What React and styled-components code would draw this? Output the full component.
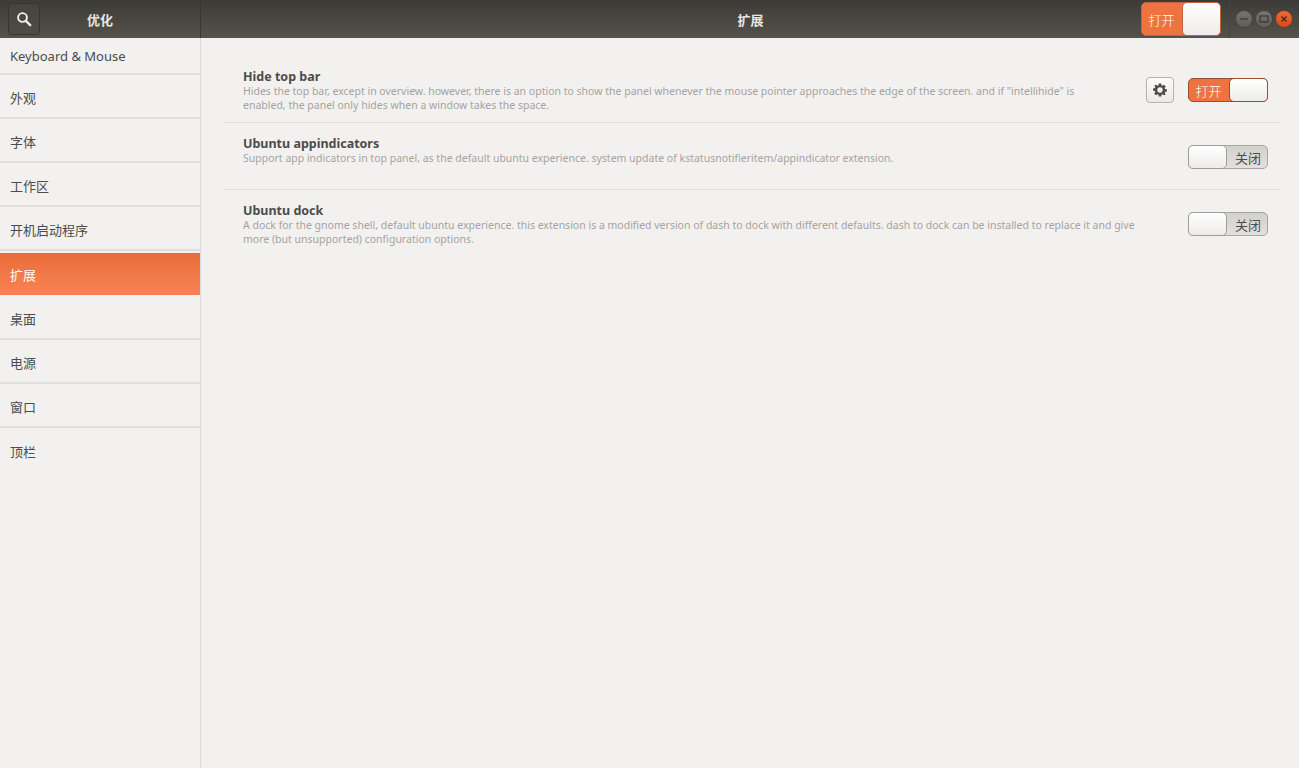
import React from "react";
import styled, { createGlobalStyle } from "styled-components";

const GlobalStyle = createGlobalStyle`
    html, body {
        margin: 0;
        padding: 0;
        height: 100%;
        background: #f2f1f0;
    }
    body {
        font-family: "Noto Sans", "Noto Sans CJK SC", sans-serif;
        overflow: hidden;
    }
`

const Window = styled.div`
    display: flex;
    flex-direction: column;
    width: 1299px;
    height: 768px;
`

const HeaderBar = styled.header`
    display: flex;
    flex: none;
    height: 38px;
    color: #e8e6e2;
    background: linear-gradient(#3c3b37, #55524a);
`

const HeaderLeft = styled.div`
    display: flex;
    align-items: center;
    flex: none;
    width: 201px;
    height: 38px;
    padding-left: 8px;
    box-sizing: border-box;
    border-right: 1px solid #383732;
`

const SearchButton = styled.button`
    display: flex;
    align-items: center;
    justify-content: center;
    width: 32px;
    height: 32px;
    padding: 0;
    border: 1px solid #35342f;
    border-radius: 4px;
    background: linear-gradient(#44433d, #4f4c45);
    color: #f2f1f0;
`

const AppTitle = styled.div`
    width: 120px;
    text-align: center;
    font-size: 13px;
    font-weight: 700;
    font-family: "Noto Sans CJK SC", sans-serif;
`

const HeaderCenter = styled.div`
    position: relative;
    display: flex;
    flex: 1;
    align-items: center;
    padding-left: 71px;
`

const PageTitle = styled.div`
    width: 100%;
    text-align: center;
    font-size: 13px;
    font-weight: 700;
    font-family: "Noto Sans CJK SC", sans-serif;
`

const HeaderSwitchSlot = styled.div`
    position: absolute;
    top: 2px;
    right: 8px;
`

const WindowControls = styled.div`
    display: flex;
    align-items: center;
    flex: none;
    gap: 4px;
    width: 70px;
    height: 38px;
    padding-left: 6px;
    box-sizing: border-box;
    border-left: 1px solid #47453f;
`

const RoundButton = styled.div`
    display: flex;
    align-items: center;
    justify-content: center;
    width: 16px;
    height: 16px;
    border-radius: 50%;
    background: ${(p) => (p.$close ? "linear-gradient(#ee6a3a, #d9481a)" : "linear-gradient(#76746e, #5f5d57)")};
    box-shadow: 0 0 0 1px ${(p) => (p.$close ? "#6e3c27" : "#45433e")};
`

const Body = styled.div`
    display: flex;
    flex: 1;
`

const Sidebar = styled.nav`
    flex: none;
    width: 201px;
    box-sizing: border-box;
    border-right: 1px solid #dddbd8;
`

const SideRow = styled.div`
    display: flex;
    align-items: center;
    box-sizing: border-box;
    height: ${(p) => (p.$first ? "37px" : "44px")};
    padding-left: 10px;
    padding-top: ${(p) => (p.$first ? "0" : "2px")};
    font-size: 13px;
    color: #4c4c4c;
    border-bottom: ${(p) => (p.$last ? "none" : "2px solid #e2e0de")};
    font-family: "Noto Sans", "Noto Sans CJK SC", sans-serif;
`

const SideRowActive = styled.div`
    display: flex;
    align-items: center;
    box-sizing: border-box;
    height: 42px;
    margin-top: 2px;
    margin-bottom: 1px;
    padding-left: 10px;
    font-size: 13px;
    color: #fff;
    background: linear-gradient(#ea6d3b, #f98354);
    font-family: "Noto Sans CJK SC", sans-serif;
`

const Content = styled.main`
    flex: 1;
    padding: 18px 20px 0 22px;
`

const ExtRow = styled.div`
    display: flex;
    align-items: flex-start;
    box-sizing: border-box;
    height: 67px;
    padding: 14px 12px 0 20px;
    border-bottom: ${(p) => (p.$last ? "none" : "1px solid #e0dedb")};
`

const ExtText = styled.div`
    width: 903px;
    flex: none;
`

const ExtName = styled.div`
    font-size: 12.5px;
    line-height: 14px;
    font-weight: 700;
    color: #4c4c4c;
`

const ExtDesc = styled.div`
    font-size: 10.5px;
    line-height: 14px;
    color: #a5a3a1;
    white-space: pre-line;
`

const ExtActions = styled.div`
    display: flex;
    align-items: center;
    flex: 1;
    justify-content: flex-end;
    gap: 14px;
    min-height: 26px;
    padding-top: 7px;
`

const GearButton = styled.button`
    display: flex;
    align-items: center;
    justify-content: center;
    width: 28px;
    height: 26px;
    padding: 0;
    box-sizing: border-box;
    border: 1px solid #b5b3b0;
    border-radius: 4px;
    background: linear-gradient(#fbfbfa, #eceae8);
    color: #4c4c4c;
`

const SwitchTrack = styled.div`
    display: flex;
    flex-direction: ${(p) => (p.$on ? "row" : "row-reverse")};
    box-sizing: border-box;
    width: 80px;
    height: ${(p) => (p.$large ? "34px" : "24px")};
    border: 1px solid ${(p) => (p.$on ? (p.$large ? "#c4643c" : "#9a4e30") : "#a8a6a3")};
    border-radius: 5px;
    background: ${(p) => (p.$on ? "#ee7340" : "linear-gradient(#d3d1ce, #e2e0de)")};
`

const SwitchLabel = styled.span`
    display: flex;
    align-items: center;
    flex: 1;
    justify-content: center;
    padding: ${(p) => (p.$on ? "0 2px 0 0" : "0 0 0 3px")};
    font-size: 13px;
    font-family: "Noto Sans CJK SC", sans-serif;
    font-weight: ${(p) => (p.$on ? 300 : 400)};
    color: ${(p) => (p.$on ? "#fff" : "#4c4c4c")};
`

const SwitchKnob = styled.span`
    flex: none;
    box-sizing: border-box;
    width: 39px;
    margin: -1px;
    border: 1px solid ${(p) => (p.$on ? (p.$large ? "#c4643c" : "#9a4e30") : "#a09e9b")};
    border-radius: 5px;
    background: linear-gradient(#ffffff, #eeecea);
`

const Switch = ({ on, large }) => (
    <SwitchTrack $on={on} $large={large}>
        <SwitchLabel $on={on}>{on ? "打开" : "关闭"}</SwitchLabel>
        <SwitchKnob $on={on} $large={large} />
    </SwitchTrack>
);

const SearchIcon = () => (
    <svg width="16" height="16" viewBox="0 0 16 16" fill="none" stroke="currentColor">
        <circle cx="6.5" cy="6.5" r="4.4" strokeWidth="1.9" />
        <path d="M10 10l4.2 4.2" strokeWidth="2.4" strokeLinecap="round" />
    </svg>
);

const GearIcon = () => (
    <svg width="14" height="14" viewBox="0 0 14 14" fill="currentColor" fillRule="evenodd">
        <path d="M5.8.5h2.4l.3 1.8 1 .4L11 1.700l1.700 1.700-1 1.500.4 1 1.800.300v2.400l-1.800.300-.4 1 1 1.500L11 12.300l-1.500-1-1 .4-.3 1.800H5.800l-.3-1.800-1-.4-1.500 1-1.700-1.700 1-1.500-.4-1L.1 7.800V5.400l1.800-.300.4-1-1-1.500L3 1.700l1.500 1 1-.4zM7 4.300a2.700 2.700 0 1 0 0 5.400 2.700 2.700 0 0 0 0-5.400z" />
    </svg>
);

const sideTop = ["外观", "字体", "工作区", "开机启动程序"];
const sideBottom = ["桌面", "电源", "窗口"];

const extensions = [
    {
        name: "Hide top bar",
        desc: "Hides the top bar, except in overview. however, there is an option to show the panel whenever the mouse pointer approaches the edge of the screen. and if \"intellihide\" is\nenabled, the panel only hides when a window takes the space.",
        on: true,
        settings: true,
    },
    {
        name: "Ubuntu appindicators",
        desc: "Support app indicators in top panel, as the default ubuntu experience. system update of kstatusnotifieritem/appindicator extension.",
        on: false,
    },
    {
        name: "Ubuntu dock",
        desc: "A dock for the gnome shell, default ubuntu experience. this extension is a modified version of dash to dock with different defaults. dash to dock can be installed to replace it and give\nmore (but unsupported) configuration options.",
        on: false,
        last: true,
    },
];

const App = () => {
    return (
        <Window>
            <GlobalStyle />
            <HeaderBar>
                <HeaderLeft>
                    <SearchButton><SearchIcon /></SearchButton>
                    <AppTitle>优化</AppTitle>
                </HeaderLeft>
                <HeaderCenter>
                    <PageTitle>扩展</PageTitle>
                    <HeaderSwitchSlot><Switch on large /></HeaderSwitchSlot>
                </HeaderCenter>
                <WindowControls>
                    <RoundButton>
                        <svg width="10" height="10" viewBox="0 0 10 10"><path d="M1 5h8" stroke="#2f2e2b" strokeWidth="1" /></svg>
                    </RoundButton>
                    <RoundButton>
                        <svg width="10" height="10" viewBox="0 0 10 10"><rect x="1" y="2" width="8" height="6" fill="none" stroke="#2f2e2b" strokeWidth="1" /></svg>
                    </RoundButton>
                    <RoundButton $close>
                        <svg width="10" height="10" viewBox="0 0 10 10"><path d="M2.500 2.500l5 5M7.500 2.500l-5 5" stroke="#3a2a20" strokeWidth="1.300" /></svg>
                    </RoundButton>
                </WindowControls>
            </HeaderBar>
            <Body>
                <Sidebar>
                    <SideRow $first>Keyboard &amp; Mouse</SideRow>
                    {sideTop.map((item) => <SideRow key={item}>{item}</SideRow>)}
                    <SideRowActive>扩展</SideRowActive>
                    {sideBottom.map((item) => <SideRow key={item}>{item}</SideRow>)}
                    <SideRow $last>顶栏</SideRow>
                </Sidebar>
                <Content>
                    {extensions.map((ext) => (
                        <ExtRow key={ext.name} $last={ext.last}>
                            <ExtText>
                                <ExtName>{ext.name}</ExtName>
                                <ExtDesc>{ext.desc}</ExtDesc>
                            </ExtText>
                            <ExtActions>
                                {ext.settings && <GearButton><GearIcon /></GearButton>}
                                <Switch on={ext.on} />
                            </ExtActions>
                        </ExtRow>
                    ))}
                </Content>
            </Body>
        </Window>
    );
}

export default App;
